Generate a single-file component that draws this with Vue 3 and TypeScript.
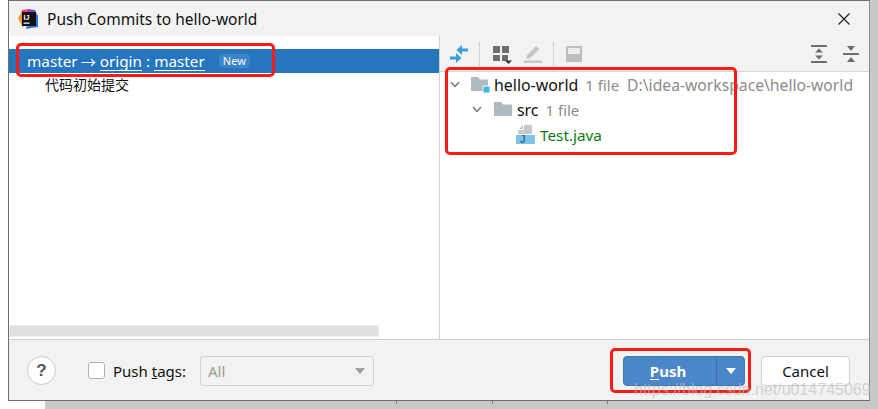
<script setup lang="ts">
const watermark = 'https://blog.csdn.net/u014745069'
</script>

<template>
  <div class="page">
    <div class="dialog">
      <header class="titlebar">
        <svg class="logo" width="20" height="20" viewBox="0 0 20 20">
          <path d="M4 1 L11 0 L10 8 L2 9 Z" fill="#fb3c6e" />
          <path d="M10 0 L17 1 L20 8 L10 8 Z" fill="#8b3fd0" />
          <path d="M0 9 L4 3 L6 16 L5 19 Z" fill="#f59a2c" />
          <path d="M8 20 L20 18 L20 6 L10 10 Z" fill="#2f79e0" />
          <rect x="4" y="3" width="14" height="14" fill="#111" />
          <text x="5.500" y="10.500" class="logo-text">IJ</text>
          <rect x="5.500" y="13.500" width="6" height="1.300" fill="#eee" />
        </svg>
        <span class="title">Push Commits to hello-world</span>
        <svg class="close" width="14" height="14" viewBox="0 0 14 14">
          <path d="M1.500 1.500 L12.500 12.500 M12.500 1.500 L1.500 12.500" stroke="#222" stroke-width="1.200" fill="none" />
        </svg>
      </header>

      <main class="body">
        <section class="left">
          <div class="left-list">
            <div class="branch-row">
              <span>master</span>
              <span class="arrow">→</span>
              <span class="link">origin</span>
              <span class="colon">:</span>
              <span class="link">master</span>
              <span class="new">New</span>
            </div>
            <div class="commit-row">代码初始提交</div>
          </div>
          <div class="hscroll"><div class="hthumb"></div></div>
        </section>

        <section class="right">
          <div class="toolbar">
            <svg class="tool first" width="20" height="20" viewBox="0 0 20 20">
              <path d="M13 1 V4.500 H19 V7.500 H13 V11 L7.500 6 Z" fill="#389fd6" />
              <path d="M7 9 V12.500 H1 V15.500 H7 V19 L12.500 14 Z" fill="#389fd6" />
            </svg>
            <span class="sep sep-a"></span>
            <svg class="tool group" width="19" height="20" viewBox="0 0 19 20">
              <rect x="0" y="2" width="7" height="7" fill="#6e6e6e" />
              <rect x="9" y="2" width="7" height="7" fill="#6e6e6e" />
              <rect x="0" y="11" width="7" height="6" fill="#6e6e6e" />
              <rect x="9" y="11" width="6" height="6" fill="#6e6e6e" />
              <path d="M12 16.500 H19 L15.500 20 Z" fill="#333" />
            </svg>
            <svg class="tool pen" width="18" height="19" viewBox="0 0 18 19">
              <path d="M3 11.500 L12 2 L15.500 5 L6.500 14 L2.500 15 Z" fill="#c6c6c6" />
              <rect x="0" y="16.500" width="18" height="2.500" fill="#c6c6c6" />
            </svg>
            <span class="sep sep-b"></span>
            <svg class="tool panel" width="16" height="16" viewBox="0 0 16 16">
              <rect x="0" y="0" width="16" height="16" rx="1" fill="#bdbdbd" />
              <rect x="2" y="2" width="12" height="6" fill="#ededed" />
            </svg>
            <span class="spacer"></span>
            <svg class="tool expand" width="16" height="18" viewBox="0 0 16 18">
              <rect x="0" y="0" width="16" height="2" fill="#6e6e6e" />
              <rect x="0" y="16" width="16" height="2" fill="#6e6e6e" />
              <path d="M4 7.500 L8 3.500 L12 7.500 Z M4 10.500 H12 L8 14.500 Z" fill="#6e6e6e" />
            </svg>
            <svg class="tool collapse" width="16" height="18" viewBox="0 0 16 18">
              <rect x="0" y="8" width="16" height="2" fill="#6e6e6e" />
              <path d="M4 1 H12 L8 6 Z M4 17 L8 12 L12 17 Z" fill="#6e6e6e" />
            </svg>
          </div>

          <div class="tree">
            <div class="tree-row level0">
              <svg class="chev" width="10" height="7" viewBox="0 0 10 7"><path d="M1 1 L5 5.500 L9 1" stroke="#6e6e6e" stroke-width="1.300" fill="none" /></svg>
              <svg class="folder-root" width="19" height="18" viewBox="0 0 19 18">
                <path d="M0 1 H7 L9 3.500 H17 V15 H0 Z" fill="#aeb9c0" />
                <rect x="12" y="10" width="7" height="7" fill="#40b6e0" stroke="#fff" stroke-width="1" />
              </svg>
              <span class="name">hello-world</span>
              <span class="meta m-files">1 file</span>
              <span class="meta m-path">D:\idea-workspace\hello-world</span>
            </div>
            <div class="tree-row level1">
              <svg class="chev" width="10" height="7" viewBox="0 0 10 7"><path d="M1 1 L5 5.500 L9 1" stroke="#6e6e6e" stroke-width="1.300" fill="none" /></svg>
              <svg class="folder" width="18" height="15" viewBox="0 0 18 15">
                <path d="M0 0 H7 L9 2.500 H18 V14 H0 Z" fill="#aeb9c0" />
              </svg>
              <span class="name src">src</span>
              <span class="meta m-files">1 file</span>
            </div>
            <div class="tree-row level2">
              <svg class="file" width="19" height="19" viewBox="0 0 19 19">
                <path d="M7 0 H16 V9 H2 V5 Z" fill="#c4c8cb" />
                <path d="M7.500 0 V4.500 H2" stroke="#fff" stroke-width="1" fill="none" />
                <rect x="0" y="10" width="19" height="9" fill="#7dc5e8" />
                <text x="4" y="18" class="file-j">J</text>
              </svg>
              <span class="java">Test.java</span>
            </div>
          </div>
        </section>
      </main>

      <footer class="footer">
        <button class="help">?</button>
        <span class="checkbox"></span>
        <span class="tags-label">Push <u>t</u>ags:</span>
        <div class="select">
          <span>All</span>
          <i class="caret"></i>
        </div>
        <span class="spacer"></span>
        <div class="push">
          <span class="push-main"><u>P</u>ush</span>
          <span class="push-drop"><i class="caret-white"></i></span>
        </div>
        <button class="cancel">Cancel</button>
      </footer>
    </div>

    <div class="under">
      <i class="tick t1"></i><i class="tick t2"></i><i class="tick t3"></i>
    </div>

    <div class="mark m1"></div>
    <div class="mark m2"></div>
    <div class="mark m3"></div>
    <span class="watermark">{{ watermark }}</span>
  </div>
</template>

<style>
html, body { margin: 0; background: #fff; }
</style>

<style scoped>
.page {
  position: relative;
  width: 878px;
  height: 409px;
  overflow: hidden;
  background: #fff;
  font-family: "Noto Sans", "Noto Sans CJK SC", sans-serif;
  font-size: 15px;
  color: #1a1a1a;
}
.page::after {
  content: "";
  position: absolute;
  top: 0;
  right: 0;
  width: 8px;
  height: 409px;
  background: #c9c9c9;
}
.dialog {
  box-sizing: border-box;
  margin-left: 8px;
  width: 862px;
  height: 401px;
  border: 1px solid #6e6e6e;
  border-right-color: #8a8a8a;
  display: flex;
  flex-direction: column;
  background: #fff;
  position: relative;
  z-index: 1;
}
.titlebar {
  height: 35px;
  flex: none;
  background: #f2f2f2;
  display: flex;
  align-items: center;
  padding: 0 18px 0 9px;
}
.logo { flex: none; }
.logo-text { font: bold 7px "Liberation Sans", sans-serif; fill: #fff; }
.title { margin-left: 9px; color: #111; font-size: 15.500px; white-space: nowrap; }
.close { margin-left: auto; }

.body { flex: 1; display: flex; min-height: 0; }
.left {
  width: 430px;
  flex: none;
  border-right: 1px solid #d1d1d1;
  display: flex;
  flex-direction: column;
}
.left-list { flex: 1; padding-top: 13px; }
.branch-row {
  height: 24px;
  background: #2675bf;
  color: #fff;
  display: flex;
  align-items: center;
  padding-left: 18px;
  white-space: nowrap;
  font-size: 15.300px;
}
.arrow { margin: 0 3px; width: 16px; }
.link { border-bottom: 1px solid #fff; line-height: 17px; height: 17px; margin-top: 1px; }
.colon { margin: 0 4px; }
.new {
  margin-left: 14px;
  background: #3c83c8;
  border-radius: 3px;
  font-size: 11px;
  line-height: 14px;
  padding: 0 4px;
}
.commit-row { height: 24px; line-height: 24px; padding-left: 36px; font-size: 14px; color: #111; }
.hscroll { height: 13px; flex: none; padding-bottom: 1px; }
.hthumb { width: 370px; height: 12px; background: #e0e0e0; border: 1px solid #efefef; box-sizing: border-box; }

.right { flex: 1; display: flex; flex-direction: column; min-width: 0; }
.toolbar {
  height: 36px;
  flex: none;
  box-sizing: border-box;
  background: #f2f2f2;
  border-bottom: 1px solid #d6d6d6;
  display: flex;
  align-items: center;
  padding: 0 10px 0 9px;
}
.tool { flex: none; }
.sep { width: 1px; height: 24px; background: #cfcfcf; flex: none; }
.sep-a { margin: 0 13px 0 10px; }
.sep-b { margin: 0 12px 0 11px; }
.pen { margin-left: 12px; }
.expand { margin-right: 16px; }
.spacer { flex: 1; }

.tree { flex: 1; }
.tree-row { height: 25px; display: flex; align-items: center; white-space: nowrap; }
.level0 { padding-left: 10px; }
.level1 { padding-left: 32px; }
.level2 { padding-left: 76px; }
.chev { flex: none; }
.folder-root { margin-left: 11px; flex: none; }
.folder { margin-left: 12px; flex: none; }
.file { flex: none; }
.file-j { font: bold 10px "Liberation Sans", sans-serif; fill: #2f6f8f; }
.name { margin-left: 4px; color: #111; font-size: 15.900px; }
.src { margin-left: 5px; }
.meta { color: #8c8c8c; }
.m-files { margin-left: 7px; }
.m-path { margin-left: 8px; font-size: 15.700px; }
.java { margin-left: 5px; color: #0a7a0a; font-size: 15.300px; }

.footer {
  height: 61px;
  flex: none;
  box-sizing: border-box;
  background: #f2f2f2;
  border-top: 1px solid #cfcfcf;
  display: flex;
  align-items: center;
  padding: 1px 19px 0 18px;
}
.help {
  width: 29px;
  height: 29px;
  box-sizing: border-box;
  border-radius: 50%;
  border: 1px solid #c9c9c9;
  background: #fff;
  padding: 0;
  font: bold 17px "Liberation Sans", sans-serif;
  color: #555;
}
.checkbox {
  width: 17px;
  height: 17px;
  margin-left: 32px;
  box-sizing: border-box;
  background: #fff;
  border: 1px solid #b0b0b0;
  border-radius: 3px;
  flex: none;
}
.tags-label { margin-left: 8px; color: #111; white-space: nowrap; }
.select {
  margin-left: 14px;
  width: 174px;
  height: 30px;
  box-sizing: border-box;
  border: 1px solid #d2d2d2;
  border-radius: 3px;
  background: #f2f2f2;
  display: flex;
  align-items: center;
  justify-content: space-between;
  padding: 0 8px 0 7px;
  color: #9a9a9a;
}
.caret {
  width: 0;
  height: 0;
  border-left: 5.500px solid transparent;
  border-right: 5.500px solid transparent;
  border-top: 6px solid #9f9f9f;
}
.push {
  width: 122px;
  height: 30px;
  box-sizing: border-box;
  display: flex;
  border-radius: 4px;
  border: 1px solid #3f78b5;
  background: #4a86c8;
  color: #fff;
  font-weight: 700;
}
.push-main { flex: 1; display: flex; align-items: center; justify-content: center; padding-right: 4px; }
.push-main u { text-underline-offset: 2px; }
.push-drop {
  width: 27px;
  flex: none;
  border-left: 1px solid #3a6fa8;
  display: flex;
  align-items: center;
  justify-content: center;
}
.caret-white {
  width: 0;
  height: 0;
  border-left: 5.500px solid transparent;
  border-right: 5.500px solid transparent;
  border-top: 6px solid #fff;
}
.cancel {
  margin-left: 16px;
  width: 89px;
  height: 30px;
  box-sizing: border-box;
  background: #fff;
  border: 1px solid #cfcfcf;
  border-radius: 4px;
  font: inherit;
  color: #111;
  padding: 0;
}

.under {
  position: absolute;
  left: 45px;
  top: 401px;
  right: 0;
  height: 8px;
  background: #c9c9c9;
}
.tick { position: absolute; top: 0; width: 1px; height: 3px; background: #777; }
.t1 { left: 351px; }
.t2 { left: 447px; }
.t3 { left: 562px; }

.mark {
  position: absolute;
  box-sizing: border-box;
  border: 3px solid #fa1c14;
  border-radius: 5px;
  z-index: 2;
}
.m1 { left: 16px; top: 43px; width: 259px; height: 34px; }
.m2 { left: 445px; top: 67px; width: 292px; height: 88px; }
.m3 { left: 610px; top: 348px; width: 141px; height: 45px; }
.watermark {
  position: absolute;
  left: 634px;
  top: 381px;
  z-index: 3;
  font: 16px "Liberation Sans", sans-serif;
  color: rgba(190, 190, 190, 0.65);
  white-space: nowrap;
}
</style>
